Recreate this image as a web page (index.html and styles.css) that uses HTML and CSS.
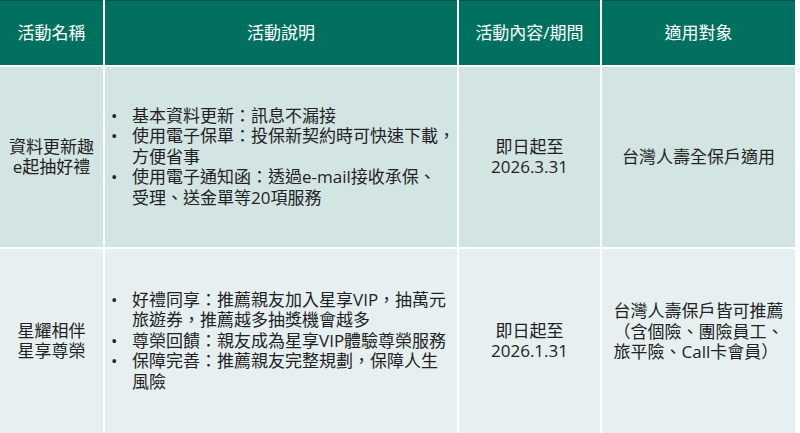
FILE: index.html
```html
<!DOCTYPE html>
<html lang="zh-Hant">
<head>
<meta charset="utf-8">
<link rel="stylesheet" href="styles.css">
</head>
<body>
<div class="table">
  <div class="th">活動名稱</div>
  <div class="th">活動說明</div>
  <div class="th">活動內容/期間</div>
  <div class="th">適用對象</div>

  <div class="td r1 center">資料更新趣<br>e起抽好禮</div>
  <div class="td r1 desc">
    <ul>
      <li>基本資料更新：訊息不漏接</li>
      <li>使用電子保單：投保新契約時可快速下載，<br>方便省事</li>
      <li>使用電子通知函：透過e-mail接收承保、<br>受理、送金單等20項服務</li>
    </ul>
  </div>
  <div class="td r1 center">即日起至<br>2026.3.31</div>
  <div class="td r1 center">台灣人壽全保戶適用</div>

  <div class="td r2 center">星耀相伴<br>星享尊榮</div>
  <div class="td r2 desc">
    <ul>
      <li>好禮同享：推薦親友加入星享VIP，抽萬元<br>旅遊券，推薦越多抽獎機會越多</li>
      <li>尊榮回饋：親友成為星享VIP體驗尊榮服務</li>
      <li>保障完善：推薦親友完整規劃，保障人生<br>風險</li>
    </ul>
  </div>
  <div class="td r2 center">即日起至<br>2026.1.31</div>
  <div class="td r2 center raise"><div class="left">台灣人壽保戶皆可推薦<br>（含個險、團險員工、<br>旅平險、Call卡會員）</div></div>
</div>
</body>
</html>
```

FILE: styles.css
```css
html, body {
  margin: 0;
  padding: 0;
  background: #ffffff;
}
body {
  font-family: "Open Sans", "Noto Sans CJK TC", sans-serif;
  font-size: 17px;
  line-height: 20.5px;
  color: #222222;
}
.table {
  width: 795px;
  display: grid;
  grid-template-columns: 103px 352px 141px 193px;
  grid-template-rows: 65px 180px 184px;
  gap: 2px;
  background: #ffffff;
}
.th {
  background: #02705f;
  color: #ffffff;
  display: flex;
  align-items: center;
  justify-content: center;
  border-top: 1px solid #015446;
}
.td {
  display: flex;
  align-items: center;
}
.r1 { background: #d2e5e3; }
.r2 { background: #e6f0f0; }
.center {
  justify-content: center;
  text-align: center;
}
.raise {
  padding-bottom: 18px;
}
.left {
  text-align: left;
}
.desc {
  padding-left: 6px;
}
ul {
  margin: 0;
  padding: 0;
  list-style: none;
}
li {
  padding-left: 21px;
}
li::before {
  content: "•";
  display: inline-block;
  width: 21px;
  margin-left: -21px;
}
```
